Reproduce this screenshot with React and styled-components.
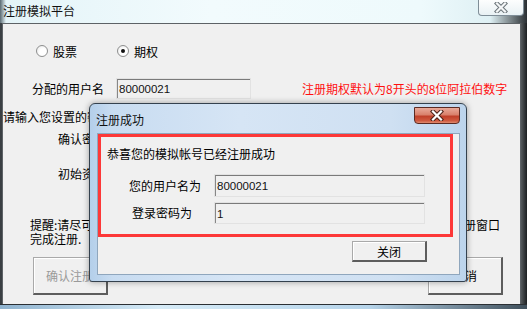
import React from "react";
import styled, { createGlobalStyle } from "styled-components";

const GlobalStyle = createGlobalStyle`
  html, body {
    margin: 0;
    padding: 0;
    background: #1e262c;
    overflow: hidden;
  }
  body {
    font-family: "Noto Sans CJK SC", "Noto Sans", sans-serif;
    font-size: 12px;
    color: #000;
  }
`;

const Screen = styled.div`
  position: relative;
  width: 527px;
  height: 309px;
  overflow: hidden;
  display: flex;
  flex-direction: column;
`;

const TitleBar = styled.div`
  height: 24px;
  display: flex;
  justify-content: space-between;
  background: linear-gradient(90deg, #5a6a72 0px, #e4f4f8 6px, #f2fbfd 40%, #eefafc 80%, #dff0f4 93%, #2a2f33 100%);
`;

const TitleText = styled.span`
  padding: 4px 0 0 3px;
  font-size: 12px;
  line-height: 14px;
  color: #111;
`;

const GlassClose = styled.div`
  width: 44px;
  height: 15px;
  margin-right: 3px;
  border: 1px solid #7f8d97;
  border-top: none;
  border-radius: 0 0 4px 4px;
  background: linear-gradient(#fdfefe, #e9f1f4);
  display: flex;
  align-items: center;
  justify-content: center;
`;

const Body = styled.div`
  height: 281px;
  display: flex;
  padding-left: 2px;
  background: linear-gradient(90deg, #3a3f43, #6b7377);
`;

const Client = styled.div`
  width: 519px;
  height: 281px;
  box-sizing: border-box;
  border: 1px solid #5d6266;
  border-bottom: none;
  background: #f0f0f0;
  display: flex;
  flex-direction: column;
`;

const RightGlass = styled.div`
  flex: 1;
  background: linear-gradient(90deg, #54595c, #1c1f21);
`;

const BottomGlass = styled.div`
  height: 4px;
  border-top: 1px solid #2b2f33;
  background: linear-gradient(90deg, #8fb3cf, #d6ebf7 30%, #b6d4ea 70%, #40505c);
`;

const Row = styled.div`
  display: flex;
  align-items: center;
  margin-top: ${({ $top }) => $top}px;
  padding-left: ${({ $left = 0 }) => $left}px;
  padding-right: ${({ $right = 0 }) => $right}px;
  height: ${({ $h = 14 }) => $h}px;
  white-space: nowrap;
  justify-content: ${({ $spread }) => ($spread ? "space-between" : "flex-start")};
`;

// hidden part of a label that runs under the dialog
const Clip = styled.span`
  display: block;
  width: ${({ $w }) => $w}px;
  overflow: hidden;
  white-space: nowrap;
  line-height: 14px;
`;

const RadioOption = styled.label`
  width: ${({ $w }) => $w}px;
  display: flex;
  align-items: center;
  gap: 5px;
`;

const RadioCircle = styled.span`
  width: 12px;
  height: 12px;
  box-sizing: border-box;
  border-radius: 50%;
  border: 1px solid #8e8f8f;
  background: radial-gradient(circle at 60% 60%, #ffffff 40%, #e4e4e4 100%);
  display: flex;
  align-items: center;
  justify-content: center;
  &::after {
    content: "";
    width: 4px;
    height: 4px;
    border-radius: 50%;
    background: ${({ $checked }) => ($checked ? "#111" : "transparent")};
  }
`;

const Label = styled.span`
  width: ${({ $w }) => $w}px;
  text-align: ${({ $align = "left" }) => $align};
  padding-left: ${({ $pad = 0 }) => $pad}px;
  box-sizing: border-box;
  line-height: 14px;
`;

const TextBox = styled.div`
  width: ${({ $w }) => $w}px;
  height: ${({ $h = 21 }) => $h}px;
  margin-left: ${({ $ml = 0 }) => $ml}px;
  box-sizing: border-box;
  border-top: 2px solid #7a7a7a;
  border-left: 2px solid #878787;
  border-bottom: 1px solid #fbfbfb;
  border-right: 1px solid #fbfbfb;
  outline: 1px solid #e2e2e2;
  outline-offset: -1px;
  background: #f0f0f0;
  display: flex;
  align-items: center;
  padding-left: 1px;
  font-family: "Liberation Sans", Arial, sans-serif;
  font-size: 11.5px;
  color: #121212;
`;

const Note = styled.span`
  margin-left: ${({ $ml }) => $ml}px;
  color: #ff1010;
`;

const Reminder = styled.div`
  margin-top: 37px;
  padding-left: 27px;
  padding-right: 20px;
  line-height: 14px;
`;

const WinButton = styled.button`
  width: 75px;
  height: ${({ $h = 38 }) => $h}px;
  padding: 0;
  box-sizing: border-box;
  border: 1px solid;
  border-color: #a9a9a9 #5d5d5d #5d5d5d #a9a9a9;
  border-width: 1px 2px 2px 1px;
  box-shadow: inset 1px 1px #ffffff;
  background: #f0f0f0;
  font-family: "Noto Sans CJK SC", sans-serif;
  font-size: 12px;
  color: ${({ disabled }) => (disabled ? "#9a9a9a" : "#000")};
`;

const Dialog = styled.div`
  position: absolute;
  left: 89px;
  top: 103px;
  width: 378px;
  height: 179px;
  box-sizing: border-box;
  border: 1px solid #34414e;
  border-radius: 6px 6px 3px 3px;
  background: linear-gradient(90deg, #b4cfea 0%, #c8dcf1 6%, #d6e5f5 40%, #cfe0f2 80%, #bcd4ec 100%);
  box-shadow: 0 0 6px rgba(0, 0, 0, 0.35);
  display: flex;
  flex-direction: column;
`;

const DialogTitle = styled.div`
  height: 29px;
  display: flex;
  justify-content: space-between;
`;

const DialogTitleText = styled.span`
  padding: 9px 0 0 6px;
  font-size: 12px;
  line-height: 14px;
  color: #111;
`;

const RedClose = styled.div`
  width: 46px;
  height: 17px;
  margin: 3px 6px 0 0;
  box-sizing: border-box;
  border: 1px solid #5b2a22;
  border-radius: 0 0 4px 4px;
  background: linear-gradient(#e9a999 0%, #d9816c 45%, #c0402a 55%, #cf5a40 85%, #e08c70 100%);
  display: flex;
  align-items: center;
  justify-content: center;
`;

const DialogClient = styled.div`
  margin: 0 6px 0 7px;
  height: 142px;
  box-sizing: border-box;
  border: 1px solid #8fa6bd;
  background: #f0f0f0;
  display: flex;
  flex-direction: column;
`;

const RedFrame = styled.div`
  width: 355px;
  height: 103px;
  box-sizing: border-box;
  border: 3px solid #fd3838;
  display: flex;
  flex-direction: column;
`;

const CloseIcon = ({ fill = "#fff", stroke = "#555", size = 14 }) => (
  <svg width={size} height={size - 3} viewBox="0 0 14 11">
    <path d="M3 1.5 L11 9.5 M11 1.5 L3 9.5" stroke={stroke} strokeWidth="4.2" strokeLinecap="square" />
    <path d="M3 1.5 L11 9.5 M11 1.5 L3 9.5" stroke={fill} strokeWidth="2.2" strokeLinecap="square" />
  </svg>
);

export default function App() {
  return (
    <>
      <GlobalStyle />
      <Screen>
        <TitleBar>
          <TitleText>注册模拟平台</TitleText>
          <GlassClose>
            <CloseIcon fill="#f4f6f7" stroke="#6b7479" />
          </GlassClose>
        </TitleBar>
        <Body>
          <Client>
            <Row $top={20} $left={33}>
              <RadioOption $w={81}>
                <RadioCircle />
                股票
              </RadioOption>
              <RadioOption $w={80}>
                <RadioCircle $checked />
                期权
              </RadioOption>
            </Row>
            <Row $top={20} $h={21}>
              <Label $w={101} $align="right">分配的用户名</Label>
              <TextBox $w={135} $ml={12}>80000021</TextBox>
              <Note $ml={51}>注册期权默认为8开头的8位阿拉伯数字</Note>
            </Row>
            <Row $top={11}>
              <Clip $w={86}>请输入您设置的密码</Clip>
            </Row>
            <Row $top={8} $left={55}>
              <Clip $w={31}>确认密码</Clip>
            </Row>
            <Row $top={21} $left={55}>
              <Clip $w={31}>初始资金</Clip>
            </Row>
            <Reminder>
              <Row $top={0} $spread>
                <Clip $w={59}>提醒:请尽可能</Clip>
                <span>册窗口</span>
              </Row>
              <Row $top={0}>完成注册.</Row>
            </Reminder>
            <Row $top={11} $h={38} $left={30} $right={17} $spread>
              <WinButton disabled>确认注册</WinButton>
              <WinButton>取消</WinButton>
            </Row>
          </Client>
          <RightGlass />
        </Body>
        <BottomGlass />

        <Dialog>
          <DialogTitle>
            <DialogTitleText>注册成功</DialogTitleText>
            <RedClose>
              <CloseIcon fill="#ffffff" stroke="#4a2018" />
            </RedClose>
          </DialogTitle>
          <DialogClient>
            <RedFrame>
              <Row $top={9} $left={6}>恭喜您的模拟帐号已经注册成功</Row>
              <Row $top={14} $h={23}>
                <Label $w={113} $pad={28}>您的用户名为</Label>
                <TextBox $w={211} $h={23}>80000021</TextBox>
              </Row>
              <Row $top={5} $h={22}>
                <Label $w={113} $pad={31}>登录密码为</Label>
                <TextBox $w={211} $h={22}>1</TextBox>
              </Row>
            </RedFrame>
            <Row $top={4} $h={21} $left={254}>
              <WinButton $h={21}>关闭</WinButton>
            </Row>
          </DialogClient>
        </Dialog>
      </Screen>
    </>
  );
}
